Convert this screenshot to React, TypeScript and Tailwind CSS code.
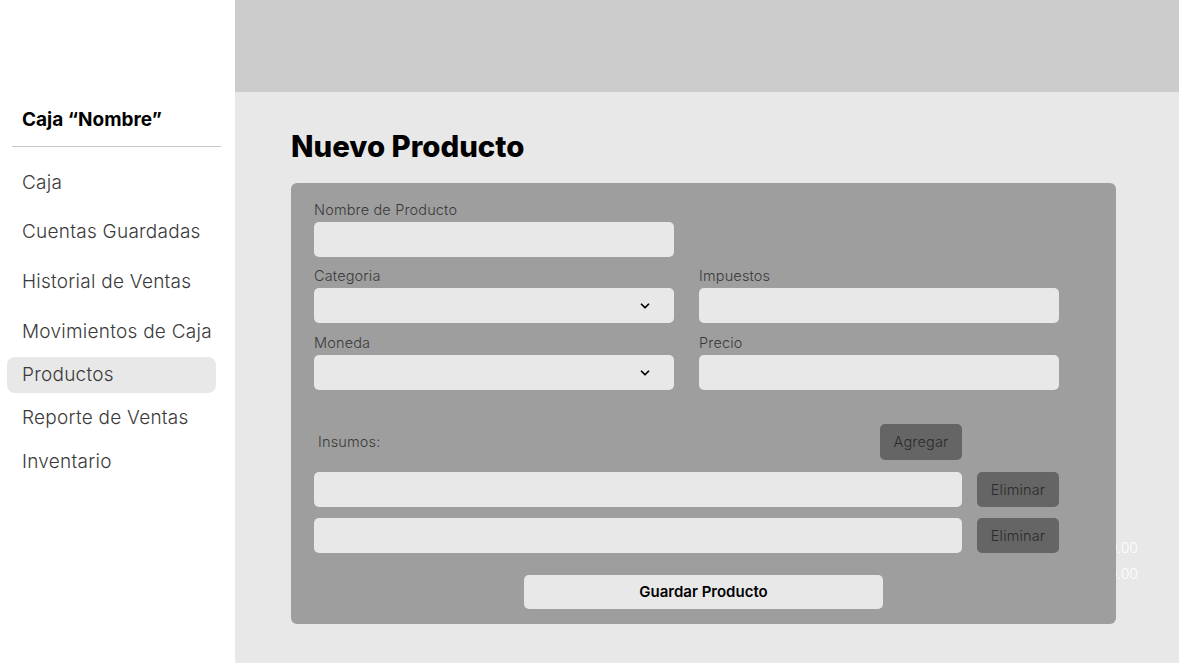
import { ChevronDown } from 'lucide-react'

const menu = [
  { label: 'Caja', mt: 'mt-0' },
  { label: 'Cuentas Guardadas', mt: 'mt-[13px]' },
  { label: 'Historial de Ventas', mt: 'mt-[14px]' },
  { label: 'Movimientos de Caja', mt: 'mt-[14px]' },
  { label: 'Productos', mt: 'mt-[7px]', active: true },
  { label: 'Reporte de Ventas', mt: 'mt-[7px]' },
  { label: 'Inventario', mt: 'mt-[8px]' },
]

function Field({ label, select }: { label: string; select?: boolean }) {
  return (
    <div className="w-[360px]">
      <div className="text-[14.5px] leading-[18px] font-light tracking-[0.15px] text-[#3a3a3a] mb-[3px]">{label}</div>
      <div className="h-[35px] rounded-[5px] bg-[#e8e8e8] flex items-center justify-end pr-[22px]">
        {select && <ChevronDown className="w-[14px] h-[14px] text-black" strokeWidth={3} />}
      </div>
    </div>
  )
}

function Insumo() {
  return (
    <div className="flex items-center">
      <div className="w-[648px] h-[35px] rounded-[5px] bg-[#e8e8e8]" />
      <button className="ml-[15px] w-[82px] h-[35px] rounded-[5px] bg-[#656565] text-[14.5px] font-light tracking-[0.15px] text-[#2b2b2b]">
        Eliminar
      </button>
    </div>
  )
}

export default function App() {
  return (
    <div className="flex w-[1179px] h-[663px] overflow-hidden bg-white" style={{ fontFamily: 'Inter, "Noto Sans", sans-serif' }}>
      <aside className="w-[235px] shrink-0 bg-white pt-[109px]">
        <div className="pl-[22px] text-[19px] leading-[22px] font-bold text-black">Caja “Nombre”</div>
        <div className="ml-[12px] mr-[14px] mt-[15px] border-t border-[#c8c8c8]" />
        <nav className="mt-[18px] ml-[7px] mr-[19px] flex flex-col">
          {menu.map(m => (
            <div key={m.label}
              className={`${m.mt} h-[36px] flex items-center pl-[15px] rounded-[8px] text-[19px] font-light tracking-[0.25px] text-[#3a3a3a] ${m.active ? 'bg-[#e8e8e8]' : ''}`}>
              {m.label}
            </div>
          ))}
        </nav>
      </aside>

      <main className="flex-1 flex flex-col bg-[#e8e8e8]">
        <div className="h-[92px] bg-[#cccccc] shrink-0" />
        <div className="relative flex-1 pl-[56px] pt-[36px]">
          <h1 className="text-[29.4px] leading-[38px] font-extrabold text-black">Nuevo Producto</h1>
          <span className="absolute right-[41px] top-[448px] text-[14px] leading-[16px] font-light text-white">0.00</span>
          <span className="absolute right-[41px] top-[474px] text-[14px] leading-[16px] font-light text-white">0.00</span>

          <div className="relative z-10 mt-[17px] w-[825px] rounded-[6px] bg-[#9e9e9e] pl-[23px] pt-[18px] pb-[15px]">
            <Field label="Nombre de Producto" />
            <div className="mt-[10px] flex gap-[25px]">
              <Field label="Categoria" select />
              <Field label="Impuestos" />
            </div>
            <div className="mt-[11px] flex gap-[25px]">
              <Field label="Moneda" select />
              <Field label="Precio" />
            </div>

            <div className="mt-[34px] w-[648px] flex items-center justify-between">
              <span className="pl-[4px] text-[14.5px] font-light tracking-[0.15px] text-[#3a3a3a]">Insumos:</span>
              <button className="w-[82px] h-[36px] rounded-[5px] bg-[#656565] text-[14.5px] font-light tracking-[0.15px] text-[#2b2b2b]">
                Agregar
              </button>
            </div>

            <div className="mt-[12px] flex flex-col gap-[11px]">
              <Insumo />
              <Insumo />
            </div>

            <div className="mt-[22px] flex justify-center pr-[23px]">
              <button className="w-[359px] h-[34px] rounded-[5px] bg-[#e8e8e8] text-[15px] font-semibold text-black">
                Guardar Producto
              </button>
            </div>
          </div>
        </div>
      </main>
    </div>
  )
}
